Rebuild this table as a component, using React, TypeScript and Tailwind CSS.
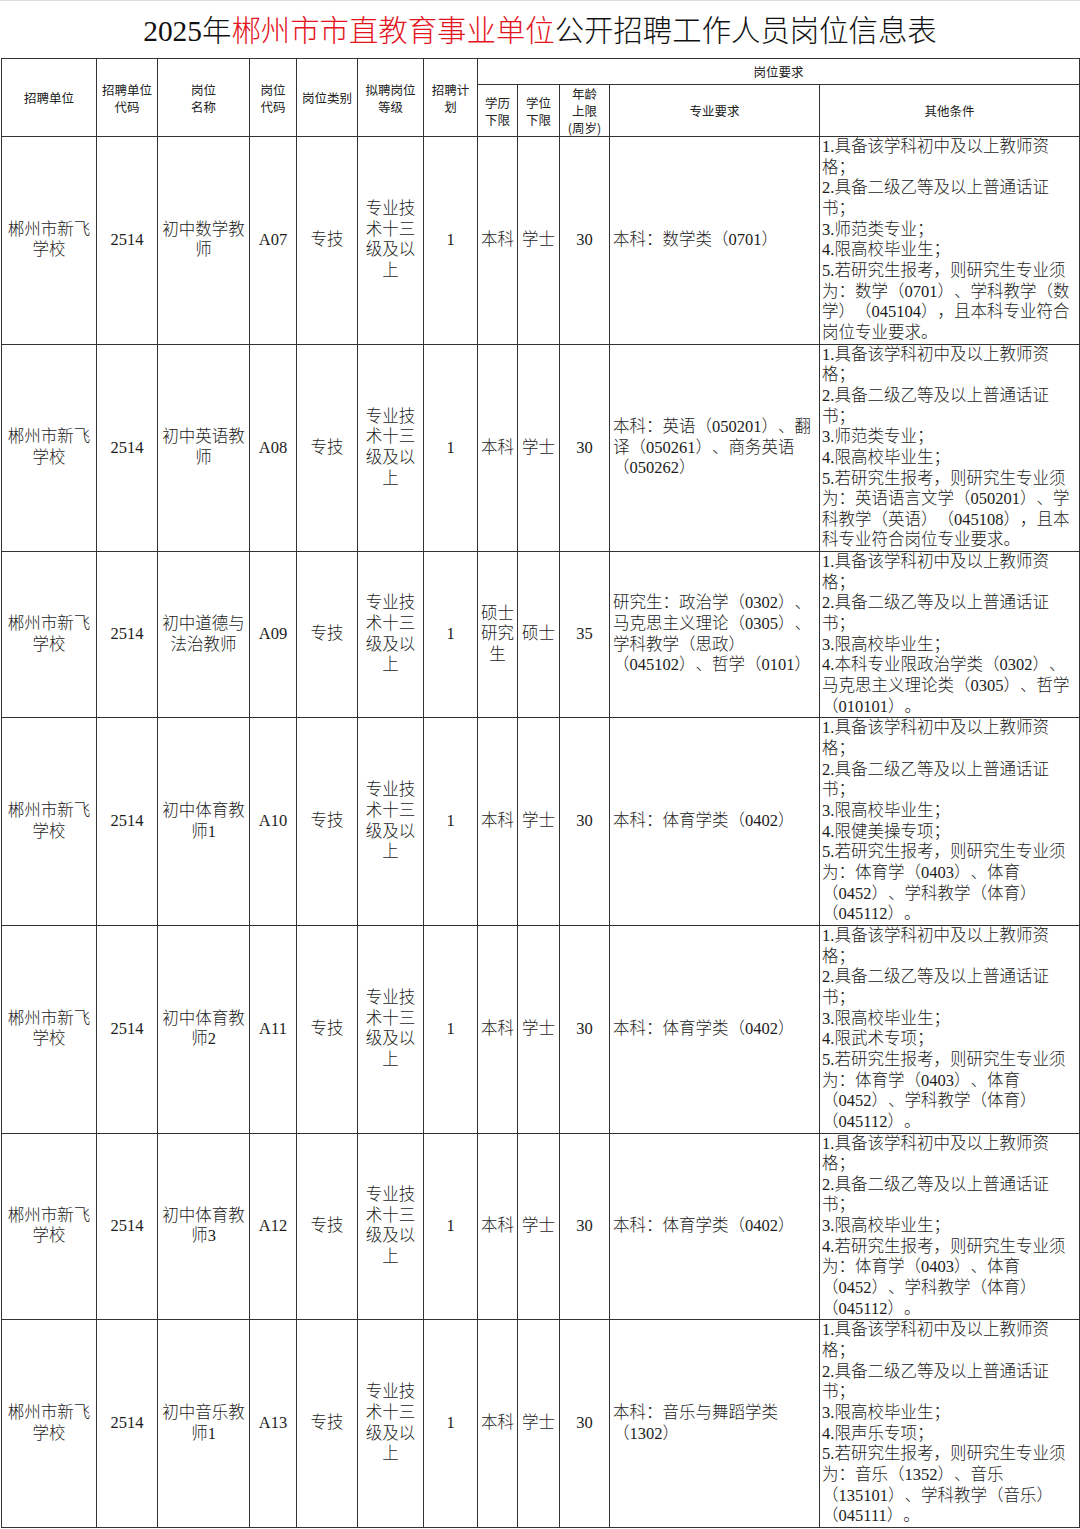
import React from "react";

interface JobRow {
  code: string;
  name: string[];
  post: string;
  edu: string[];
  degree: string;
  age: string;
  major: string[];
  other: string[];
}

const unit = ["郴州市新飞", "学校"];
const level = ["专业技", "术十三", "级及以", "上"];

const common = [
  "1.具备该学科初中及以上教师资",
  "格；",
  "2.具备二级乙等及以上普通话证",
  "书；",
];

const rows: JobRow[] = [
  {
    code: "2514",
    name: ["初中数学教", "师"],
    post: "A07",
    edu: ["本科"],
    degree: "学士",
    age: "30",
    major: ["本科：数学类（0701）"],
    other: [
      ...common,
      "3.师范类专业；",
      "4.限高校毕业生；",
      "5.若研究生报考，则研究生专业须",
      "为：数学（0701）、学科教学（数",
      "学）（045104），且本科专业符合",
      "岗位专业要求。",
    ],
  },
  {
    code: "2514",
    name: ["初中英语教", "师"],
    post: "A08",
    edu: ["本科"],
    degree: "学士",
    age: "30",
    major: ["本科：英语（050201）、翻", "译（050261）、商务英语", "（050262）"],
    other: [
      ...common,
      "3.师范类专业；",
      "4.限高校毕业生；",
      "5.若研究生报考，则研究生专业须",
      "为：英语语言文学（050201）、学",
      "科教学（英语）（045108），且本",
      "科专业符合岗位专业要求。",
    ],
  },
  {
    code: "2514",
    name: ["初中道德与", "法治教师"],
    post: "A09",
    edu: ["硕士", "研究", "生"],
    degree: "硕士",
    age: "35",
    major: [
      "研究生：政治学（0302）、",
      "马克思主义理论（0305）、",
      "学科教学（思政）",
      "（045102）、哲学（0101）",
    ],
    other: [
      ...common,
      "3.限高校毕业生；",
      "4.本科专业限政治学类（0302）、",
      "马克思主义理论类（0305）、哲学",
      "（010101）。",
    ],
  },
  {
    code: "2514",
    name: ["初中体育教", "师1"],
    post: "A10",
    edu: ["本科"],
    degree: "学士",
    age: "30",
    major: ["本科：体育学类（0402）"],
    other: [
      ...common,
      "3.限高校毕业生；",
      "4.限健美操专项；",
      "5.若研究生报考，则研究生专业须",
      "为：体育学（0403）、体育",
      "（0452）、学科教学（体育）",
      "（045112）。",
    ],
  },
  {
    code: "2514",
    name: ["初中体育教", "师2"],
    post: "A11",
    edu: ["本科"],
    degree: "学士",
    age: "30",
    major: ["本科：体育学类（0402）"],
    other: [
      ...common,
      "3.限高校毕业生；",
      "4.限武术专项；",
      "5.若研究生报考，则研究生专业须",
      "为：体育学（0403）、体育",
      "（0452）、学科教学（体育）",
      "（045112）。",
    ],
  },
  {
    code: "2514",
    name: ["初中体育教", "师3"],
    post: "A12",
    edu: ["本科"],
    degree: "学士",
    age: "30",
    major: ["本科：体育学类（0402）"],
    other: [
      ...common,
      "3.限高校毕业生；",
      "4.若研究生报考，则研究生专业须",
      "为：体育学（0403）、体育",
      "（0452）、学科教学（体育）",
      "（045112）。",
    ],
  },
  {
    code: "2514",
    name: ["初中音乐教", "师1"],
    post: "A13",
    edu: ["本科"],
    degree: "学士",
    age: "30",
    major: ["本科：音乐与舞蹈学类", "（1302）"],
    other: [
      ...common,
      "3.限高校毕业生；",
      "4.限声乐专项；",
      "5.若研究生报考，则研究生专业须",
      "为：音乐（1352）、音乐",
      "（135101）、学科教学（音乐）",
      "（045111）。",
    ],
  },
];

const Lines = ({ items }: { items: string[] }) => (
  <>
    {items.map((t, i) => (
      <div key={i} className="whitespace-nowrap">
        {t}
      </div>
    ))}
  </>
);

const th = "border border-[#333] p-0 text-center align-middle font-normal";
const td = "border border-[#333] p-0 text-center align-middle";

export default function App() {
  return (
    <div className="w-[1080px] bg-white border-t border-[#dedede] text-[#1c1c1c] [text-spacing-trim:space-all]">
      <div className="h-[57px] pt-[4px] flex items-center justify-center text-[29.4px] font-['Liberation_Serif','Noto_Sans_CJK_SC',serif] font-light text-[#111]">
        2025年<span className="text-[#e3141c]">郴州市市直教育事业单位</span>公开招聘工作人员岗位信息表
      </div>
      <table className="ml-[1px] w-[1078px] table-fixed border-collapse">
        <colgroup>
          <col className="w-[95px]" />
          <col className="w-[61px]" />
          <col className="w-[92px]" />
          <col className="w-[47px]" />
          <col className="w-[61px]" />
          <col className="w-[66px]" />
          <col className="w-[54px]" />
          <col className="w-[40px]" />
          <col className="w-[42px]" />
          <col className="w-[50px]" />
          <col className="w-[210px]" />
          <col className="w-[260px]" />
        </colgroup>
        <thead className="font-['Noto_Sans_CJK_SC',sans-serif] text-[12.5px] leading-[17px] text-[#222]">
          <tr className="h-[26px]">
            <th rowSpan={2} className={th}>招聘单位</th>
            <th rowSpan={2} className={th}>
              <Lines items={["招聘单位", "代码"]} />
            </th>
            <th rowSpan={2} className={th}>
              <Lines items={["岗位", "名称"]} />
            </th>
            <th rowSpan={2} className={th}>
              <Lines items={["岗位", "代码"]} />
            </th>
            <th rowSpan={2} className={th}>岗位类别</th>
            <th rowSpan={2} className={th}>
              <Lines items={["拟聘岗位", "等级"]} />
            </th>
            <th rowSpan={2} className={th}>
              <Lines items={["招聘计", "划"]} />
            </th>
            <th colSpan={5} className={th}>岗位要求</th>
          </tr>
          <tr className="h-[50px]">
            <th className={th}>
              <Lines items={["学历", "下限"]} />
            </th>
            <th className={th}>
              <Lines items={["学位", "下限"]} />
            </th>
            <th className={th}>
              <Lines items={["年龄", "上限", "(周岁)"]} />
            </th>
            <th className={th}>专业要求</th>
            <th className={th}>其他条件</th>
          </tr>
        </thead>
        <tbody className="font-['Liberation_Serif','Noto_Sans_CJK_SC',serif] font-light text-[16.5px] leading-[20.65px]">
          {rows.map((r) => (
            <tr key={r.post}>
              <td className={td}>
                <Lines items={unit} />
              </td>
              <td className={td}>{r.code}</td>
              <td className={td}>
                <Lines items={r.name} />
              </td>
              <td className={td}>{r.post}</td>
              <td className={td}>专技</td>
              <td className={td}>
                <Lines items={level} />
              </td>
              <td className={td}>1</td>
              <td className={td}>
                <Lines items={r.edu} />
              </td>
              <td className={td}>{r.degree}</td>
              <td className={td}>{r.age}</td>
              <td className={`${td} !text-left pl-[3px]`}>
                <Lines items={r.major} />
              </td>
              <td className={`${td} !text-left pl-[2px]`}>
                <Lines items={r.other} />
              </td>
            </tr>
          ))}
        </tbody>
      </table>
    </div>
  );
}
